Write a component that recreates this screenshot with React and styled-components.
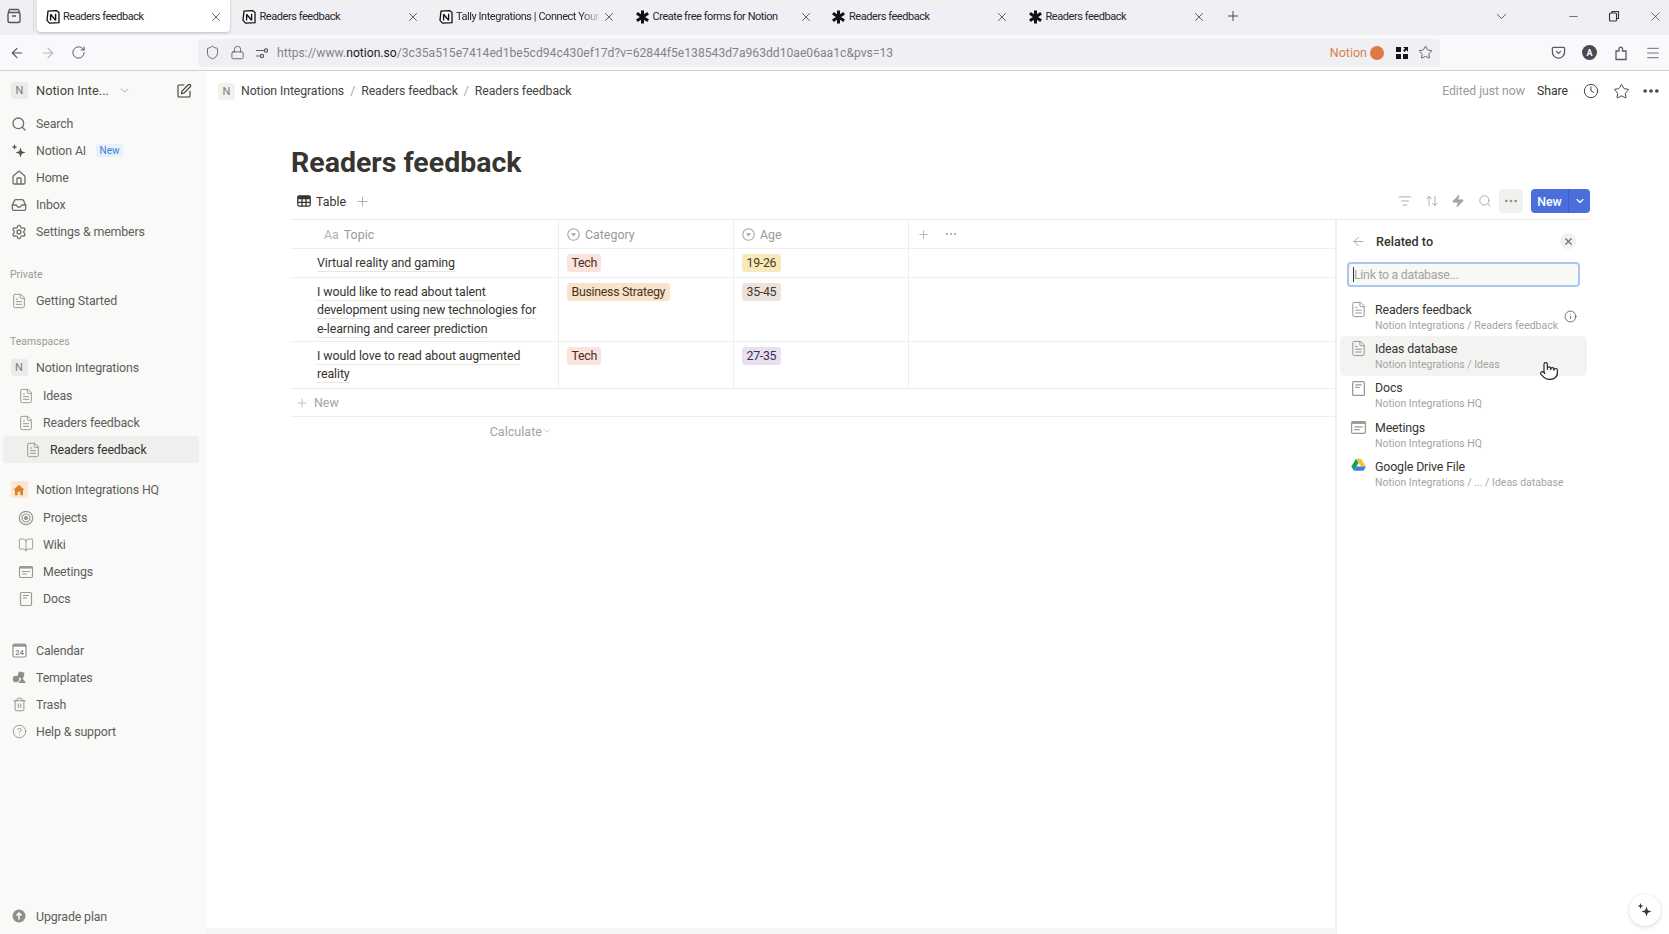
import styled, { createGlobalStyle } from 'styled-components'
import {
  ArrowLeft, ArrowRight, ArrowUpDown, BookOpen, ChevronDown, CircleHelp, Clock, Ellipsis, FileText, Home,
  Inbox, Info, ListFilter, Lock, Menu, Minus, Plus, Pointer, RotateCw, Search, Settings, Shield, SquarePen,
  Star, Trash2, X, Zap,
} from 'lucide-react'

const GlobalStyle = createGlobalStyle`
  html, body { margin: 0; padding: 0; height: 100%; overflow: hidden; }
  body { font-family: Roboto, "Noto Sans", sans-serif; color: #37352f; background: #fff; }
  * { box-sizing: border-box; }
`

const NotionMark = () => (
  <svg width="14" height="14" viewBox="0 0 14 14">
    <path d="M2 1.2 10.6.6 13 2.6V12.6L3.6 13.2 1 10.4Z" fill="#fff" stroke="#111" strokeWidth="1.3" />
    <path d="M4.6 4.2V10.4M4.6 4.2 9.6 10.4M9.6 3.8V10.4" fill="none" stroke="#111" strokeWidth="1.4" />
  </svg>
)

const TallyMark = () => (
  <svg width="16" height="16" viewBox="0 0 16 16">
    <path d="M8 1V15M2 4 14 12M14 4 2 12" stroke="#111" strokeWidth="3.2" />
  </svg>
)

const ViewIcon = () => (
  <svg width="16" height="16" viewBox="0 0 16 16" fill="none" stroke="#55555c" strokeWidth="1.4">
    <rect x="2" y="4.5" width="12" height="10" rx="1.5" />
    <path d="M3.5 1.5H12.5M2.5 4.5 3.5 1.5M13.5 4.5 12.5 1.5M6 8H10" />
  </svg>
)

const PermissionIcon = () => (
  <svg width="14" height="14" viewBox="0 0 14 14" fill="none" stroke="#5b5b66" strokeWidth="1.2">
    <path d="M1 4.5H9M1 10H4.5" />
    <circle cx="11" cy="4.5" r="1.6" />
    <circle cx="7" cy="10" r="1.6" />
  </svg>
)

const GridIcon = () => (
  <svg width="14" height="14" viewBox="0 0 14 14" fill="#15141a">
    <rect x="1" y="1" width="5" height="5" />
    <rect x="1" y="8" width="5" height="5" />
    <rect x="8" y="8" width="5" height="5" />
    <path d="M8 1H13V6L11.5 4 9.5 6 8 4.5 10 2.8Z" />
  </svg>
)

const PocketIcon = () => (
  <svg width="15" height="15" viewBox="0 0 16 16" fill="none" stroke="#5b5b66" strokeWidth="1.4">
    <path d="M2.5 2.5H13.5A1 1 0 0 1 14.5 3.5V7.5A6.5 6.5 0 0 1 1.5 7.5V3.5A1 1 0 0 1 2.5 2.5Z" />
    <path d="M5.5 6.5 8 9 10.5 6.5" />
  </svg>
)

const ExtensionIcon = () => (
  <svg width="16" height="16" viewBox="0 0 16 16" fill="none" stroke="#5b5b66" strokeWidth="1.3">
    <path d="M3 6H6V3.5A1.8 1.8 0 0 1 9.5 3.5V6H13V14.5H3Z" />
  </svg>
)

const RestoreIcon = () => (
  <svg width="12" height="12" viewBox="0 0 12 12" fill="none" stroke="#333" strokeWidth="1.1">
    <rect x="1.5" y="3" width="7" height="8" rx="1" />
    <path d="M4 3V1.5H10.5V8.5H8.5" />
  </svg>
)

const MeetingsIcon = ({ size = 16 }) => (
  <svg width={size} height={size} viewBox="0 0 16 16" fill="none" stroke="#9a9994" strokeWidth="1.2">
    <rect x="1.5" y="2.5" width="13" height="11" rx="1.2" />
    <path d="M1.5 3.5H14.5" strokeWidth="2.2" />
    <path d="M4 7.5H12M4 10H9" />
  </svg>
)

const DocsIcon = ({ size = 16 }) => (
  <svg width={size} height={size} viewBox="0 0 16 16" fill="none" stroke="#9a9994" strokeWidth="1.2">
    <rect x="2.5" y="1.5" width="11" height="13" rx="1.2" />
    <path d="M5 4.5H11M5 7H9" />
  </svg>
)

const ProjectsIcon = () => (
  <svg width="16" height="16" viewBox="0 0 16 16" fill="none" stroke="#9a9994">
    <circle cx="8" cy="8" r="6.7" strokeWidth="1.2" />
    <circle cx="8" cy="8" r="4" strokeWidth="1.2" />
    <circle cx="8" cy="8" r="1.7" fill="#9a9994" />
  </svg>
)

const CalendarIcon = () => (
  <svg width="15" height="15" viewBox="0 0 15 15">
    <rect x="1" y="1" width="13" height="13" rx="1.5" fill="#fff" stroke="#8f8e8a" strokeWidth="1.2" />
    <path d="M1 2.5H14" stroke="#8f8e8a" strokeWidth="2.4" />
    <text x="7.5" y="12" fontSize="7.5" fontWeight="700" textAnchor="middle" fill="#8f8e8a" fontFamily="Roboto">24</text>
  </svg>
)

const TemplatesIcon = () => (
  <svg width="15" height="15" viewBox="0 0 15 15" fill="#8f8e8a">
    <circle cx="4" cy="9" r="3.2" />
    <rect x="6" y="2" width="6" height="6" rx="1" transform="rotate(15 9 5)" />
    <path d="M10 7.5 14 13H6.5Z" />
  </svg>
)

const UpgradeIcon = () => (
  <svg width="14" height="14" viewBox="0 0 14 14">
    <circle cx="7" cy="7" r="6.5" fill="#8f8e8a" />
    <path d="M7 10.5V4M4.5 6.5 7 4 9.5 6.5" fill="none" stroke="#fff" strokeWidth="1.5" />
  </svg>
)

const HouseIcon = () => (
  <svg width="12" height="12" viewBox="0 0 12 12" fill="#d9822b">
    <path d="M6 .8 11.6 6H10V11.2H7.3V7.8H4.7V11.2H2V6H.4Z" />
  </svg>
)

const SparkIcon = ({ size = 16, color = '#55534e' }) => (
  <svg width={size} height={size} viewBox="0 0 16 16" fill={color}>
    <path d="M9.5 4.5 10.8 8.2 14.5 9.5 10.8 10.8 9.5 14.5 8.2 10.8 4.5 9.5 8.2 8.2Z" />
    <path d="M3.5 1 4.3 3.2 6.5 4 4.3 4.8 3.5 7 2.7 4.8.5 4 2.7 3.2Z" />
  </svg>
)

const TableIcon = () => (
  <svg width="14" height="14" viewBox="0 0 14 14" fill="none" stroke="#37352f" strokeWidth="1.3">
    <rect x=".8" y="1.8" width="12.4" height="10.4" rx="1.5" />
    <path d="M.8 4.5H13.2M.8 8.3H13.2M5 4.5V12.2M9 4.5V12.2" />
    <path d="M.8 3H13.2" strokeWidth="2.4" />
  </svg>
)

const SelectIcon = () => (
  <svg width="13" height="13" viewBox="0 0 13 13">
    <circle cx="6.5" cy="6.5" r="5.7" fill="none" stroke="#a5a4a0" strokeWidth="1.1" />
    <path d="M4 5.2H9L6.5 8.5Z" fill="#a5a4a0" />
  </svg>
)

const DriveIcon = () => (
  <svg width="15" height="14" viewBox="0 0 15 14">
    <path d="M5 .8H10L15 8.5H10Z" fill="#f6c334" />
    <path d="M5 .8 7.5 5 3 12.8.3 8.5Z" fill="#1f9d57" />
    <path d="M3 12.8 5.4 8.5H15L12.5 12.8Z" fill="#3f7de8" />
  </svg>
)

const tabs = [
  { title: 'Readers feedback', mark: 'notion', active: true },
  { title: 'Readers feedback', mark: 'notion', tinted: true },
  { title: 'Tally Integrations | Connect Your', mark: 'notion', tinted: true, fade: true },
  { title: 'Create free forms for Notion', mark: 'tally', tinted: true },
  { title: 'Readers feedback', mark: 'tally', tinted: true },
  { title: 'Readers feedback', mark: 'tally' },
]

const navRows = [
  { icon: <Search size={16} />, label: 'Search' },
  { icon: <SparkIcon />, label: 'Notion AI', badge: 'New' },
  { icon: <Home size={16} />, label: 'Home' },
  { icon: <Inbox size={16} />, label: 'Inbox' },
  { icon: <Settings size={16} />, label: 'Settings & members' },
]

const fileIcon = <FileText size={16} strokeWidth={1.5} color="#9a9994" />

const hqRows = [
  { icon: <ProjectsIcon />, label: 'Projects' },
  { icon: <BookOpen size={16} strokeWidth={1.4} color="#9a9994" />, label: 'Wiki' },
  { icon: <MeetingsIcon />, label: 'Meetings' },
  { icon: <DocsIcon />, label: 'Docs' },
]

const toolRows = [
  { icon: <CalendarIcon />, label: 'Calendar' },
  { icon: <TemplatesIcon />, label: 'Templates' },
  { icon: <Trash2 size={15} strokeWidth={1.5} color="#8f8e8a" />, label: 'Trash' },
  { icon: <CircleHelp size={15} strokeWidth={1.4} color="#8f8e8a" />, label: 'Help & support' },
]

const tableRows = [
  { topic: ['Virtual reality and gaming'], category: ['Tech', '#f9e3dc', '#4e2e25'], age: ['19-26', '#f7e9bb', '#4d3a18'], height: 29 },
  {
    topic: ['I would like to read about talent', 'development using new technologies for', 'e-learning and career prediction'],
    category: ['Business Strategy', '#f8e3cb', '#49331d'],
    age: ['35-45', '#ebe3dc', '#44362d'],
    height: 64,
  },
  {
    topic: ['I would love to read about augmented', 'reality'],
    category: ['Tech', '#f9e3dc', '#4e2e25'],
    age: ['27-35', '#e8e0f0', '#3d2f52'],
    height: 47,
  },
]

const databases = [
  { title: 'Readers feedback', path: 'Notion Integrations / Readers feedback', icon: <FileText size={17} strokeWidth={1.3} color="#8f8e8a" />, info: true },
  { title: 'Ideas database', path: 'Notion Integrations / Ideas', icon: <FileText size={17} strokeWidth={1.3} color="#8f8e8a" />, hover: true },
  { title: 'Docs', path: 'Notion Integrations HQ', icon: <DocsIcon size={17} /> },
  { title: 'Meetings', path: 'Notion Integrations HQ', icon: <MeetingsIcon size={17} /> },
  { title: 'Google Drive File', path: 'Notion Integrations / ... / Ideas database', icon: <DriveIcon /> },
]

export default function App() {
  return (
    <Page>
      <GlobalStyle />
      <TabBar>
        <ViewButton><ViewIcon /></ViewButton>
        <TabList>
          {tabs.map((tab, i) => (
            <Tab key={i} $active={tab.active} $tinted={tab.tinted}>
              <TabMark>{tab.mark === 'notion' ? <NotionMark /> : <TallyMark />}</TabMark>
              <TabTitle $fade={tab.fade}>{tab.title}</TabTitle>
              <X size={14} strokeWidth={1.3} color="#333" />
            </Tab>
          ))}
          <NewTab><Plus size={16} strokeWidth={1.3} color="#333" /></NewTab>
        </TabList>
        <TabOverflow><ChevronDown size={17} strokeWidth={1.2} color="#444" /></TabOverflow>
        <WindowButtons>
          <Minus size={13} strokeWidth={1.2} color="#333" />
          <RestoreIcon />
          <X size={15} strokeWidth={1.1} color="#333" />
        </WindowButtons>
      </TabBar>

      <Toolbar>
        <NavButtons>
          <ArrowLeft size={16} color="#4f4f58" strokeWidth={1.6} />
          <ArrowRight size={16} color="#b5b5bb" strokeWidth={1.6} />
          <RotateCw size={15} color="#4f4f58" strokeWidth={1.5} />
        </NavButtons>
        <UrlBar>
          <UrlIcons>
            <Shield size={15} color="#5b5b66" strokeWidth={1.4} />
            <Lock size={15} color="#5b5b66" strokeWidth={1.4} />
            <PermissionIcon />
          </UrlIcons>
          <UrlText>https://www.<b>notion.so</b>/3c35a515e7414ed1be5cd94c430ef17d?v=62844f5e138543d7a963dd10ae06aa1c&pvs=13</UrlText>
          <NotionLabel>Notion</NotionLabel>
          <OrangeDot />
          <GridSlot><GridIcon /></GridSlot>
          <Star size={15} color="#45454d" strokeWidth={1.3} />
        </UrlBar>
        <ToolbarIcons>
          <PocketIcon />
          <Avatar>A</Avatar>
          <ExtensionIcon />
          <Menu size={16} color="#5b5b66" strokeWidth={1.3} />
        </ToolbarIcons>
      </Toolbar>

      <Body>
        <Sidebar>
          <Workspace>
            <WorkspaceBox>N</WorkspaceBox>
            <WorkspaceName>Notion Inte...</WorkspaceName>
            <ChevronDown size={13} color="#9a9994" strokeWidth={1.5} />
            <ComposeSlot><SquarePen size={16} color="#37352f" strokeWidth={1.6} /></ComposeSlot>
          </Workspace>

          {navRows.map((row) => (
            <SideRow key={row.label}>
              <SideIcon $tone="#706f6b">{row.icon}</SideIcon>
              <SideText>{row.label}</SideText>
              {row.badge && <NewBadge>{row.badge}</NewBadge>}
            </SideRow>
          ))}

          <SideLabel $top={18}>Private</SideLabel>
          <SideRow $gap={2}>
            <SideIcon>{fileIcon}</SideIcon>
            <SideText>Getting Started</SideText>
          </SideRow>

          <SideLabel $top={16}>Teamspaces</SideLabel>
          <SideRow $gap={2}>
            <SideIcon><TeamBox>N</TeamBox></SideIcon>
            <SideText>Notion Integrations</SideText>
          </SideRow>
          <SideRow $indent={7} $gap={1}>
            <SideIcon>{fileIcon}</SideIcon>
            <SideText>Ideas</SideText>
          </SideRow>
          <SideRow $indent={7}>
            <SideIcon>{fileIcon}</SideIcon>
            <SideText>Readers feedback</SideText>
          </SideRow>
          <SideRow $indent={14} $active>
            <SideIcon>{fileIcon}</SideIcon>
            <SideText $active>Readers feedback</SideText>
          </SideRow>

          <SideRow $gap={13}>
            <SideIcon><TeamBox $orange><HouseIcon /></TeamBox></SideIcon>
            <SideText>Notion Integrations HQ</SideText>
          </SideRow>
          {hqRows.map((row, i) => (
            <SideRow key={row.label} $indent={7} $gap={i === 0 ? 1 : 0}>
              <SideIcon>{row.icon}</SideIcon>
              <SideText>{row.label}</SideText>
            </SideRow>
          ))}

          {toolRows.map((row, i) => (
            <SideRow key={row.label} $gap={i === 0 ? 25 : 0}>
              <SideIcon>{row.icon}</SideIcon>
              <SideText>{row.label}</SideText>
            </SideRow>
          ))}

          <UpgradeRow>
            <SideIcon><UpgradeIcon /></SideIcon>
            <SideText>Upgrade plan</SideText>
          </UpgradeRow>
        </Sidebar>

        <Main>
          <TopBar>
            <Crumbs>
              <CrumbBox>N</CrumbBox>
              <Crumb>Notion Integrations</Crumb>
              <CrumbSlash>/</CrumbSlash>
              <Crumb>Readers feedback</Crumb>
              <CrumbSlash>/</CrumbSlash>
              <Crumb>Readers feedback</Crumb>
            </Crumbs>
            <TopActions>
              <EditedText>Edited just now</EditedText>
              <ShareText>Share</ShareText>
              <TopIcon><Clock size={16} strokeWidth={1.5} /></TopIcon>
              <TopIcon><Star size={17} strokeWidth={1.4} /></TopIcon>
              <TopIcon><Ellipsis size={20} strokeWidth={2.4} /></TopIcon>
            </TopActions>
          </TopBar>

          <Content>
            <Title>Readers feedback</Title>
            <DbToolbar>
              <ViewTab>
                <TableIcon />
                <ViewName>Table</ViewName>
                <Plus size={15} color="#a5a4a0" strokeWidth={1.4} />
              </ViewTab>
              <DbActions>
                <DbIcon><ListFilter size={14} strokeWidth={1.5} /></DbIcon>
                <DbIcon><ArrowUpDown size={14} strokeWidth={1.5} /></DbIcon>
                <DbIcon><Zap size={14} fill="#a5a4a0" strokeWidth={1} /></DbIcon>
                <DbIcon><Search size={14} strokeWidth={1.5} /></DbIcon>
                <MoreButton><Ellipsis size={16} strokeWidth={2} color="#8f8e8a" /></MoreButton>
                <NewButton>
                  <NewLabel>New</NewLabel>
                  <NewCaret><ChevronDown size={12} strokeWidth={2.2} /></NewCaret>
                </NewButton>
              </DbActions>
            </DbToolbar>

            <DbArea>
              <TableArea>
                <HeadRow>
                  <HeadCell $w={269} $pad={34}>
                    <AaMark>Aa</AaMark>
                    <span>Topic</span>
                  </HeadCell>
                  <HeadCell $w={175} $pad={8}>
                    <SelectIcon />
                    <span>Category</span>
                  </HeadCell>
                  <HeadCell $w={175} $pad={8}>
                    <SelectIcon />
                    <span>Age</span>
                  </HeadCell>
                  <HeadTail>
                    <Plus size={13} color="#a5a4a0" strokeWidth={1.4} />
                    <Ellipsis size={14} color="#a5a4a0" strokeWidth={1.8} />
                  </HeadTail>
                </HeadRow>
                {tableRows.map((row, i) => (
                  <DataRow key={i} $h={row.height}>
                    <TopicCell>
                      {row.topic.map((line) => (
                        <TopicLine key={line}><TopicText>{line}</TopicText></TopicLine>
                      ))}
                    </TopicCell>
                    <TagCell>
                      <Tag $bg={row.category[1]} $fg={row.category[2]}>{row.category[0]}</Tag>
                    </TagCell>
                    <TagCell>
                      <Tag $bg={row.age[1]} $fg={row.age[2]}>{row.age[0]}</Tag>
                    </TagCell>
                    <EmptyCell />
                  </DataRow>
                ))}
                <AddRow>
                  <Plus size={14} color="#b4b3af" strokeWidth={1.4} />
                  <span>New</span>
                </AddRow>
                <CalcRow>
                  <span>Calculate</span>
                  <ChevronDown size={10} strokeWidth={1.5} />
                </CalcRow>
              </TableArea>

              <Panel>
                <PanelHead>
                  <ArrowLeft size={15} color="#a5a4a0" strokeWidth={1.5} />
                  <PanelTitle>Related to</PanelTitle>
                  <CloseDot><X size={11} strokeWidth={2.4} color="#6f6e69" /></CloseDot>
                </PanelHead>
                <LinkInput>
                  <Caret />
                  <span>Link to a database...</span>
                </LinkInput>
                <DbList>
                  {databases.map((db) => (
                    <DbRow key={db.title} $hover={db.hover}>
                      <DbRowIcon>{db.icon}</DbRowIcon>
                      <DbRowText>
                        <DbTitle>{db.title}</DbTitle>
                        <DbPath>{db.path}</DbPath>
                      </DbRowText>
                      {db.info && <InfoSlot><Info size={13} strokeWidth={1.5} color="#55534e" /></InfoSlot>}
                      {db.hover && <HandCursor><Pointer size={20} fill="#fff" color="#222" strokeWidth={1.4} /></HandCursor>}
                    </DbRow>
                  ))}
                </DbList>
              </Panel>
            </DbArea>
          </Content>
          <ScrollTrack />
          <AssistButton><SparkIcon size={16} color="#37352f" /></AssistButton>
        </Main>
      </Body>
    </Page>
  )
}

const Page = styled.div`
  display: flex;
  flex-direction: column;
  width: 1669px;
  height: 934px;
  overflow: hidden;
`

const TabBar = styled.div`
  display: flex;
  align-items: flex-start;
  height: 35px;
  background: #f0f0f4;
`

const ViewButton = styled.div`
  display: flex;
  align-items: center;
  justify-content: center;
  width: 34px;
  height: 32px;
  padding-right: 6px;
  border-right: 1px solid #d8d8dc;
`

const TabList = styled.div`
  display: flex;
  gap: 3.5px;
  margin-left: 3px;
`

const Tab = styled.div`
  display: flex;
  align-items: center;
  width: 193px;
  height: 32px;
  padding: 0 7px 0 8px;
  border-radius: ${({ $active }) => ($active ? '0 0 4px 4px' : '0')};
  background: ${({ $active }) => ($active ? '#fff' : 'transparent')};
  box-shadow: ${({ $active }) => ($active ? '0 1px 3px rgba(0, 0, 0, 0.22)' : 'none')};
  border-top: 1px solid ${({ $tinted }) => ($tinted ? '#f8eee2' : 'transparent')};
`

const TabMark = styled.span`
  display: flex;
  align-items: center;
  justify-content: center;
  width: 15px;
  margin-right: 3px;
`

const TabTitle = styled.span`
  flex: 1;
  overflow: hidden;
  white-space: nowrap;
  font-size: 11px;
  letter-spacing: -0.45px;
  color: #26262b;
  ${({ $fade }) => $fade && 'mask-image: linear-gradient(to right, #000 85%, transparent);'}
`

const NewTab = styled.div`
  display: flex;
  align-items: center;
  height: 32px;
  margin-left: 8.5px;
`

const TabOverflow = styled.div`
  display: flex;
  align-items: center;
  height: 32px;
  margin-left: 252px;
`

const WindowButtons = styled.div`
  display: flex;
  align-items: center;
  gap: 28px;
  height: 32px;
  margin-left: 57px;
`

const Toolbar = styled.div`
  display: flex;
  align-items: center;
  height: 36px;
  background: #f9f9fb;
  border-bottom: 1px solid #cfcfd3;
`

const NavButtons = styled.div`
  display: flex;
  align-items: center;
  gap: 15px;
  width: 198px;
  padding-left: 9px;
`

const UrlBar = styled.div`
  display: flex;
  align-items: center;
  width: 1242px;
  height: 28px;
  padding: 0 7px;
  border-radius: 4px;
  background: #f0f0f4;
`

const UrlIcons = styled.div`
  display: flex;
  align-items: center;
  gap: 10px;
  width: 72px;
`

const UrlText = styled.span`
  flex: 1;
  font-size: 12.15px;
  white-space: nowrap;
  color: #83838a;

  b {
    font-weight: 400;
    color: #1c1b22;
  }
`

const NotionLabel = styled.span`
  font-size: 12.5px;
  color: #d9804f;
`

const OrangeDot = styled.span`
  width: 14px;
  height: 14px;
  margin: 0 11px 0 3px;
  border-radius: 50%;
  background: #e07a45;
`

const GridSlot = styled.span`
  display: flex;
  margin-right: 9px;
`

const ToolbarIcons = styled.div`
  display: flex;
  align-items: center;
  gap: 16px;
  margin-left: 111px;
`

const Avatar = styled.span`
  display: flex;
  align-items: center;
  justify-content: center;
  width: 15px;
  height: 15px;
  border-radius: 50%;
  background: #4a4a52;
  color: #fff;
  font-size: 9px;
  font-weight: 700;
`

const Body = styled.div`
  position: relative;
  display: flex;
  flex: 1;
  min-height: 0;
`

const Sidebar = styled.aside`
  display: flex;
  flex-direction: column;
  flex: none;
  width: 206px;
  padding-bottom: 4.5px;
  background: #f9f9f8;
`

const Workspace = styled.div`
  display: flex;
  align-items: center;
  height: 39px;
  padding-left: 11px;
`

const WorkspaceBox = styled.span`
  display: flex;
  align-items: center;
  justify-content: center;
  width: 17px;
  height: 17px;
  margin-right: 8px;
  border-radius: 3px;
  background: #ebebe9;
  color: #7c7b77;
  font-size: 11px;
`

const WorkspaceName = styled.span`
  width: 82px;
  font-size: 12.8px;
  color: #45443f;
`

const ComposeSlot = styled.span`
  display: flex;
  margin-left: 45px;
`

const SideRow = styled.div`
  display: flex;
  align-items: center;
  flex: none;
  height: 27px;
  margin: ${({ $gap = 0 }) => $gap}px 7px 0 3px;
  padding-left: ${({ $indent = 0 }) => 7 + $indent}px;
  border-radius: 4px;
  background: ${({ $active }) => ($active ? '#efefed' : 'transparent')};
`

const UpgradeRow = styled(SideRow)`
  margin-top: auto;
`

const SideIcon = styled.span`
  display: flex;
  align-items: center;
  justify-content: center;
  flex: none;
  width: 18px;
  margin-right: 8px;
  color: ${({ $tone = '#9a9994' }) => $tone};
`

const SideText = styled.span`
  font-size: 12.4px;
  letter-spacing: -0.15px;
  white-space: nowrap;
  color: ${({ $active }) => ($active ? '#37352f' : '#5f5e5b')};
`

const NewBadge = styled.span`
  margin-left: 10px;
  padding: 1px 3.5px;
  border-radius: 3px;
  background: #e7f0fb;
  color: #3b82d6;
  font-size: 10px;
`

const SideLabel = styled.div`
  display: flex;
  align-items: center;
  flex: none;
  height: 22px;
  margin-top: ${({ $top }) => $top}px;
  padding-left: 10px;
  font-size: 10.5px;
  color: #9a9994;
`

const TeamBox = styled.span`
  display: flex;
  align-items: center;
  justify-content: center;
  width: 17px;
  height: 17px;
  border-radius: 3px;
  background: ${({ $orange }) => ($orange ? '#fae6d2' : '#ebebe9')};
  color: #7c7b77;
  font-size: 11px;
`

const Main = styled.main`
  position: relative;
  display: flex;
  flex-direction: column;
  flex: 1;
  min-width: 0;
`

const TopBar = styled.div`
  display: flex;
  align-items: center;
  justify-content: space-between;
  flex: none;
  height: 40px;
  padding: 0 8px 0 12px;
`

const Crumbs = styled.div`
  display: flex;
  align-items: center;
`

const CrumbBox = styled(WorkspaceBox)`
  margin-right: 6px;
  background: #f1f1ef;
`

const Crumb = styled.span`
  font-size: 12.3px;
  letter-spacing: -0.1px;
  color: #45443f;
`

const CrumbSlash = styled.span`
  margin: 0 6px;
  font-size: 12.3px;
  color: #a5a4a0;
`

const TopActions = styled.div`
  display: flex;
  align-items: center;
`

const EditedText = styled.span`
  margin-right: 12px;
  font-size: 12.2px;
  color: #9a9994;
`

const ShareText = styled.span`
  margin-right: 13px;
  font-size: 12.2px;
  color: #37352f;
`

const TopIcon = styled.span`
  display: flex;
  justify-content: center;
  width: 20px;
  margin-right: 10px;
  color: #45443f;

  &:last-child {
    margin-right: 0;
  }
`

const Content = styled.div`
  display: flex;
  flex-direction: column;
  flex: 1;
  min-height: 0;
  padding: 32px 79px 0 84px;
`

const Title = styled.h1`
  margin: 0;
  padding-left: 1px;
  font-size: 28.5px;
  line-height: 40px;
  font-weight: 700;
  color: #37352f;
`

const DbToolbar = styled.div`
  display: flex;
  align-items: center;
  justify-content: space-between;
  flex: none;
  height: 24px;
  margin: 6px 0;
`

const ViewTab = styled.div`
  display: flex;
  align-items: center;
  padding-left: 7px;
`

const ViewName = styled.span`
  margin: 0 9px 0 5px;
  font-size: 12.4px;
  color: #37352f;
`

const DbActions = styled.div`
  display: flex;
  align-items: center;
`

const DbIcon = styled.span`
  display: flex;
  justify-content: center;
  width: 26.5px;
  color: #a5a4a0;
`

const MoreButton = styled.span`
  display: flex;
  align-items: center;
  justify-content: center;
  width: 24px;
  height: 24px;
  margin: 0 8px 0 1px;
  border-radius: 4px;
  background: #f1f1ef;
`

const NewButton = styled.div`
  display: flex;
  align-items: stretch;
  width: 59px;
  height: 24px;
  border-radius: 4px;
  background: #4a6fdc;
  color: #fff;
`

const NewLabel = styled.span`
  display: flex;
  align-items: center;
  justify-content: center;
  width: 38px;
  border-right: 1px solid #3f60c2;
  font-size: 12.4px;
  font-weight: 500;
`

const NewCaret = styled.span`
  display: flex;
  align-items: center;
  justify-content: center;
  flex: 1;
`

const DbArea = styled.div`
  display: flex;
  flex: 1;
  min-height: 0;
  border-top: 1px solid #eeeeec;
`

const TableArea = styled.div`
  flex: none;
  width: 1045px;
`

const HeadRow = styled.div`
  display: flex;
  height: 29px;
  border-bottom: 1px solid #eeeeec;
`

const HeadCell = styled.div`
  display: flex;
  align-items: center;
  gap: 5px;
  flex: none;
  width: ${({ $w }) => $w}px;
  padding-left: ${({ $pad }) => $pad}px;
  border-right: 1px solid #eeeeec;
  font-size: 12.4px;
  color: #9a9994;
`

const AaMark = styled.span`
  font-size: 12.4px;
  color: #b4b3af;
`

const HeadTail = styled.div`
  display: flex;
  align-items: center;
  gap: 14px;
  padding-left: 8px;
`

const DataRow = styled.div`
  display: flex;
  height: ${({ $h }) => $h}px;
  border-bottom: 1px solid #eeeeec;
`

const TopicCell = styled.div`
  flex: none;
  width: 269px;
  padding: 4px 0 0 27px;
  border-right: 1px solid #eeeeec;
`

const TopicLine = styled.div`
  height: 18.3px;
  line-height: 18px;
  white-space: nowrap;
`

const TopicText = styled.span`
  padding-bottom: 1px;
  border-bottom: 1px solid #e6e6e3;
  font-size: 12.4px;
  letter-spacing: -0.1px;
  color: #37352f;
`

const TagCell = styled.div`
  display: flex;
  align-items: flex-start;
  flex: none;
  width: 175px;
  padding: 5px 0 0 8px;
  border-right: 1px solid #eeeeec;
`

const Tag = styled.span`
  height: 18px;
  padding: 0 4.5px;
  border-radius: 3px;
  background: ${({ $bg }) => $bg};
  color: ${({ $fg }) => $fg};
  font-size: 12.4px;
  line-height: 18px;
  letter-spacing: -0.3px;
`

const EmptyCell = styled.div`
  flex: 1;
`

const AddRow = styled.div`
  display: flex;
  align-items: center;
  gap: 5px;
  height: 28px;
  padding-left: 5px;
  border-bottom: 1px solid #eeeeec;
  font-size: 12.4px;
  color: #a5a4a0;
`

const CalcRow = styled.div`
  display: flex;
  align-items: center;
  justify-content: flex-end;
  width: 268px;
  height: 28px;
  padding-right: 6px;
  font-size: 12.6px;
  color: #a5a4a0;
`

const Panel = styled.div`
  flex: 1;
  border-left: 2px solid #f0f0ee;
`

const PanelHead = styled.div`
  display: flex;
  align-items: center;
  height: 42px;
  padding: 0 14px;
`

const PanelTitle = styled.span`
  flex: 1;
  margin-left: 10px;
  font-size: 12.6px;
  font-weight: 500;
  color: #37352f;
`

const CloseDot = styled.span`
  display: flex;
  align-items: center;
  justify-content: center;
  width: 16px;
  height: 16px;
  border-radius: 50%;
  background: #f1f1ef;
`

const LinkInput = styled.div`
  display: flex;
  align-items: center;
  height: 25px;
  margin: 0 10px;
  padding-left: 4px;
  border: 2px solid #a9c8ee;
  border-radius: 4px;
  background: #f8f8f6;
  font-size: 12.4px;
  letter-spacing: -0.3px;
  color: #a5a4a0;
`

const Caret = styled.span`
  width: 1px;
  height: 15px;
  background: #37352f;
`

const DbList = styled.div`
  display: flex;
  flex-direction: column;
  margin-top: 10px;
  padding: 0 3px;
`

const DbRow = styled.div`
  position: relative;
  display: flex;
  align-items: center;
  height: 39.3px;
  padding-left: 9px;
  border-radius: 5px;
  background: ${({ $hover }) => ($hover ? '#f3f3f2' : 'transparent')};
`

const DbRowIcon = styled.span`
  display: flex;
  justify-content: center;
  flex: none;
  width: 18px;
  margin-right: 8px;
  align-self: flex-start;
  padding-top: 4px;
`

const DbRowText = styled.div`
  display: flex;
  flex-direction: column;
`

const DbTitle = styled.span`
  font-size: 12.4px;
  line-height: 17px;
  letter-spacing: -0.15px;
  white-space: nowrap;
  color: #37352f;
`

const DbPath = styled.span`
  margin-top: 1px;
  font-size: 10.5px;
  line-height: 14px;
  white-space: nowrap;
  color: #a5a4a0;
`

const InfoSlot = styled.span`
  position: absolute;
  right: 10px;
  top: 13px;
  display: flex;
`

const HandCursor = styled.span`
  position: absolute;
  left: 199px;
  top: 25px;
  display: flex;
`

const ScrollTrack = styled.div`
  position: absolute;
  left: 0;
  bottom: 0;
  width: 1130px;
  height: 6px;
  background: #f5f5f4;
`

const AssistButton = styled.div`
  position: absolute;
  right: 8px;
  bottom: 8px;
  display: flex;
  align-items: center;
  justify-content: center;
  width: 32px;
  height: 32px;
  border-radius: 50%;
  background: #fff;
  box-shadow: 0 0 0 1px rgba(15, 15, 15, 0.05), 0 2px 4px rgba(15, 15, 15, 0.1);
`
